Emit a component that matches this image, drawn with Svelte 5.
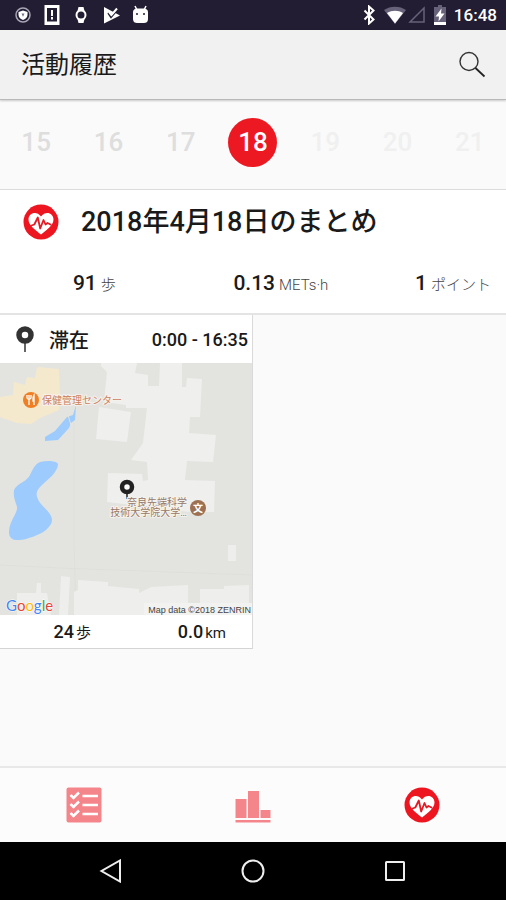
<script lang="ts">
  const days = [15, 16, 17, 18, 19, 20, 21];
  const today = 18;

  let selectedDay = $state(18);
</script>

{#snippet heart()}
  <svg class="heart" viewBox="0 0 36 36" aria-hidden="true">
    <circle cx="18" cy="18" r="17.5" fill="#ed1520" />
    <path
      d="M18 30.5C13 26.5 5.5 21.5 5.5 15.5C5.5 9 13.5 6.5 18 12.5C22.5 6.5 30.5 9 30.5 15.5C30.5 21.5 23 26.5 18 30.5Z"
      fill="#fff"
    />
    <path
      d="M8.5 21.5L11.3 20.5L14.8 13.5L17.2 24.5L20.5 16L22.5 20.5L24.5 19L27.5 20.5"
      fill="none"
      stroke="#e31b26"
      stroke-width="1.8"
      stroke-linecap="round"
      stroke-linejoin="round"
    />
  </svg>
{/snippet}

<div class="screen">
  <div class="status-bar">
    <div class="notifications">
      <svg viewBox="0 0 20 22" width="20" height="22" aria-hidden="true">
        <circle cx="10" cy="11" r="7" fill="none" stroke="#a9a6b4" stroke-width="1.5" />
        <path d="M10 6.5L14.5 8V11C14.5 13.5 12 15.3 10 16C8 15.3 5.500 13.5 5.5 11V8Z" fill="#fff" />
        <path d="M8.5 9.5H11.5L10 12.8Z" fill="#77728a" />
      </svg>
      <svg viewBox="0 0 20 22" width="20" height="22" aria-hidden="true">
        <path d="M2.5 1H17.5V21H2.500ZM5 4V17.5H15V4Z" fill="#fff" fill-rule="evenodd" />
        <path d="M9 6H11V12H9ZM9 13H11V15.5H9Z" fill="#fff" />
      </svg>
      <svg viewBox="0 0 20 22" width="20" height="22" aria-hidden="true">
        <path d="M7.5 3H12.5L13.5 7H6.5ZM6.5 15H13.5L12.5 19H7.5Z" fill="#fff" />
        <circle cx="10" cy="11" r="4.5" fill="none" stroke="#fff" stroke-width="2" />
      </svg>
      <svg viewBox="0 0 20 22" width="20" height="22" aria-hidden="true">
        <path d="M4 3L20 11.5L4 19.5Z" fill="#fff" />
        <path d="M8 9L11 13.500L16.500 7" fill="none" stroke="#231d33" stroke-width="1.5" />
        <path d="M9 8L11.5 11L17 4.5" fill="none" stroke="#fff" stroke-width="2" />
      </svg>
      <svg viewBox="0 0 20 22" width="20" height="22" aria-hidden="true">
        <path d="M6 2L8 6M17 2L15 6" stroke="#fff" stroke-width="1.5" />
        <path
          d="M4 8C4 6 6 4.5 8 4.5H15C17 4.5 19 6 19 8V15C19 18 17 19 15 19H8C6 19 4 18 4 15Z"
          fill="#fff"
        />
        <circle cx="8" cy="10" r="1" fill="#231d33" />
        <circle cx="15" cy="10" r="1" fill="#231d33" />
      </svg>
    </div>
    <div class="system">
      <svg viewBox="0 0 14 20" width="14" height="20" aria-hidden="true">
        <path
          d="M2.5 5.5L11.5 14.5L7 18.5V1.5L11.5 5.5L2.5 14.5"
          fill="none"
          stroke="#fff"
          stroke-width="2"
        />
      </svg>
      <svg viewBox="0 0 22 18" width="22" height="18" aria-hidden="true">
        <path d="M0 4C6-.5 16-.5 22 4L11 18Z" fill="#67627a" />
        <path d="M3 7C8 4 14 4 19 7L11 17.5Z" fill="#fff" />
      </svg>
      <svg class="signal" viewBox="0 0 18 18" width="18" height="18" aria-hidden="true">
        <path d="M16 2V16H2Z" fill="none" stroke="#67627a" stroke-width="1.5" />
      </svg>
      <svg viewBox="0 0 12 20" width="12" height="20" aria-hidden="true">
        <path d="M4 0H8V2H12V20H0V2H4Z" fill="#67627a" />
        <path d="M0 17H12V20H0Z" fill="#fff" />
        <path d="M7.5 3.5L1.5 11.5H5L4.5 16.5L10.5 8.5H7Z" fill="#fff" />
      </svg>
      <time>16:48</time>
    </div>
  </div>

  <header>
    <h1>活動履歴</h1>
    <button class="search" aria-label="検索">
      <svg viewBox="0 0 28 28" width="28" height="28" aria-hidden="true">
        <circle cx="11" cy="10.500" r="9" fill="none" stroke="#333" stroke-width="1.4" />
        <path d="M17.5 17L26.5 25.5" stroke="#222" stroke-width="1.8" />
      </svg>
    </button>
  </header>

  <div class="days">
    {#each days as day}
      <button
        class="day"
        class:future={day > today}
        class:selected={day === selectedDay}
        onclick={() => (selectedDay = day)}
      >
        <span>{day}</span>
      </button>
    {/each}
  </div>

  <section class="summary">
    <div class="summary-title">
      {@render heart()}
      <h2>2018年4月18日のまとめ</h2>
    </div>
    <div class="stats">
      <div><b>91</b> <span>歩</span></div>
      <div><b>0.13</b> <span>METs·h</span></div>
      <div><b>1</b> <span>ポイント</span></div>
    </div>
  </section>

  <main>
    <article class="card">
      <div class="card-header">
        <svg viewBox="0 0 22 28" width="22" height="28" aria-hidden="true">
          <path d="M11 16V27" stroke="#666" stroke-width="2" />
          <circle cx="11" cy="10" r="6" fill="#fff" stroke="#333" stroke-width="5.5" />
        </svg>
        <h3>滞在</h3>
        <time>0:00 - 16:35</time>
      </div>
      <svg class="map" viewBox="0 0 252 252" role="img" aria-label="地図">
        <rect width="252" height="252" fill="#e3e4e0" />
        <path d="M74 60V180L76 252M0 202L60 205L252 212" fill="none" stroke="#dedfdb" />
        <path
          d="M37 4L59 6L60 33L59 47L40 55L31 61L17 60L0 54V34L13 32L14 19L25 22L27 14L35 15Z"
          fill="#f5e9cd"
        />
        <path
          d="M101 0H137L135 10L148 12V23H159L160 0H182V24H186L187 15L202 16L200 54H190L189 70L216 72L213 99L187 98L185 117L215 118L214 149H190L107 139L108 110L142 111L143 118L148 117L147 99L131 97L143 80L147 45L126 45V42L104 39L107 9L101 3Z"
          fill="#efefed"
        />
        <path d="M99 44L131 49L127 79L96 76Z" fill="#efefed" />
        <path
          d="M228 182H236V198H228ZM61 213L70 214L68 252H59ZM37 220H41V230H47L51 252H17V230H36ZM78 217L108 219V223L139 226V230L151 224L188 222V244H200V226H224V223L249 222V252H74V229L78 227Z"
          fill="#eeeeec"
        />
        <path d="M76 42L75 57L71 60L69 65L58 77L45 78V74L55 68L67 54L73 52Z" fill="#9dcbfd" />
        <path d="M68 52L71 62" stroke="#e3e4e0" />
        <path
          d="M40 99C48 97 57 98 58 101C58 108 51 114 42 122C34 129 36 134 41 141C46 147 55 153 51 161C46 170 35 173 26 176C17 178 9 178 9 169C9 158 18 150 17 144C16 139 13 135 14 127C17 120 27 119 30 112C33 106 35 101 40 99Z"
          fill="#9dcbfd"
        />
        <circle cx="31" cy="37" r="8" fill="#ef7f22" />
        <path
          d="M29 32V42M27 32V35Q29 38 31 35V32M34 42V32Q32.5 34 33 38H34"
          fill="none"
          stroke="#fff"
          stroke-width="1.3"
        />
        <text class="place orange" x="42" y="41">保健管理センター</text>
        <path d="M127 128V136" stroke="#555" stroke-width="2" />
        <circle cx="127" cy="124" r="5" fill="#fff" stroke="#222" stroke-width="4.5" />
        <text class="place brown" x="187" y="143" text-anchor="end">奈良先端科学</text>
        <text class="place brown" x="187" y="153" text-anchor="end">技術大学院大学…</text>
        <circle cx="198" cy="145" r="8" fill="#9c7052" />
        <text class="school" x="198" y="149" text-anchor="middle">文</text>
        <text class="google" x="6" y="248"
          ><tspan fill="#4285f4">G</tspan><tspan fill="#ea4335">o</tspan><tspan fill="#fbbc05"
            >o</tspan
          ><tspan fill="#4285f4">g</tspan><tspan fill="#34a853">l</tspan><tspan fill="#ea4335"
            >e</tspan
          ></text
        >
        <rect x="144" y="240" width="108" height="12" fill="#f2f2f0" />
        <text class="credit" x="251" y="250" text-anchor="end">Map data ©2018 ZENRIN</text>
      </svg>
      <div class="card-footer">
        <div><b>24</b> <span>歩</span></div>
        <div><b>0.0</b> <span>km</span></div>
      </div>
    </article>
  </main>

  <nav class="tabs">
    <button aria-label="チェックリスト">
      <svg viewBox="0 0 36 36" aria-hidden="true">
        <rect x="0.5" y="0.5" width="35" height="35" rx="2" fill="#f4868b" />
        <path
          d="M4.5 8L7.5 11L13 5.5M4.5 17L7.5 20L13 14.5M4.5 26L7.5 29L13 23.5M16.5 9H32M16.5 18H32M16.5 27H32"
          fill="none"
          stroke="#fff"
          stroke-width="2.5"
        />
      </svg>
    </button>
    <button aria-label="グラフ">
      <svg viewBox="0 0 36 36" aria-hidden="true">
        <path
          d="M0.5 12H11.5V31H0.5ZM13 4H24V31H13ZM25.5 23H35.5V31H25.5ZM0.5 33H35.5V35.5H0.5Z"
          fill="#f4868b"
        />
      </svg>
    </button>
    <button aria-label="活動履歴">{@render heart()}</button>
  </nav>

  <nav class="system-nav">
    <button aria-label="戻る">
      <svg viewBox="0 0 24 24" aria-hidden="true">
        <path d="M21 1.5V22.5L2.5 12Z" />
      </svg>
    </button>
    <button aria-label="ホーム">
      <svg viewBox="0 0 24 24" aria-hidden="true"><circle cx="12" cy="12" r="10.5" /></svg>
    </button>
    <button aria-label="最近">
      <svg viewBox="0 0 24 24" aria-hidden="true">
        <rect x="3" y="3" width="18" height="18" rx="0.5" />
      </svg>
    </button>
  </nav>
</div>

<style>
  :global(body) {
    margin: 0;
  }

  .screen {
    display: flex;
    flex-direction: column;
    min-height: 100vh;
    background: #fafafa;
    color: #1a1a1a;
    font-family: Roboto, "Noto Sans CJK JP", sans-serif;
  }

  button {
    display: flex;
    align-items: center;
    justify-content: center;
    padding: 0;
    border: none;
    background: none;
    font-family: inherit;
    cursor: pointer;
  }

  h1,
  h2,
  h3 {
    margin: 0;
  }

  b {
    font-weight: 500;
  }

  svg {
    display: block;
    flex-shrink: 0;
  }

  .status-bar {
    display: flex;
    align-items: center;
    justify-content: space-between;
    height: 30px;
    padding: 0 9px 0 13px;
    background: #231d33;
    color: #fff;
  }

  .notifications,
  .system {
    display: flex;
    align-items: center;
    gap: 9px;
  }

  .system {
    gap: 8px;
  }

  .signal {
    margin-left: -6px;
  }

  .system time {
    font-size: 17px;
    font-weight: 500;
  }

  header {
    display: flex;
    align-items: center;
    justify-content: space-between;
    height: 69px;
    padding: 0 20px 0 21px;
    background: #f1f1f1;
    border-bottom: 1px solid #b9b9b9;
    box-shadow: 0 1px 2px rgba(0, 0, 0, 0.2);
  }

  h1 {
    font-size: 24px;
    font-weight: 400;
    line-height: 36px;
  }

  .days {
    display: grid;
    grid-template-columns: repeat(7, 1fr);
    padding: 18px 0 22px;
    border-bottom: 1px solid #dcdcdc;
  }

  .day {
    color: #dedede;
    font-size: 26px;
    font-weight: 500;
  }

  .day span {
    width: 49px;
    line-height: 49px;
    border-radius: 50%;
  }

  .day.future {
    color: #f0f0f0;
  }

  .day.selected span {
    background: #ed1922;
    color: #fff;
  }

  .summary {
    background: #fff;
    border-bottom: 2px solid #e4e4e4;
  }

  .heart {
    width: 36px;
    height: 36px;
  }

  .summary-title {
    display: flex;
    align-items: center;
    gap: 22px;
    height: 63px;
    padding-left: 23px;
  }

  h2 {
    font-size: 27px;
    font-weight: 500;
    line-height: 36px;
  }

  .stats {
    display: grid;
    grid-template-columns: 116fr 213fr 163fr;
    height: 60px;
    padding-right: 15px;
    line-height: 60px;
    text-align: right;
    white-space: nowrap;
  }

  .stats b {
    font-size: 21px;
  }

  .stats span {
    color: #444;
    font-size: 15px;
    font-weight: 300;
  }

  main {
    flex: 1;
  }

  .card {
    box-sizing: border-box;
    width: 50%;
    background: #fff;
    border-right: 1px solid #dadada;
    border-bottom: 1px solid #d4d4d4;
  }

  .card-header {
    display: flex;
    align-items: center;
    gap: 13px;
    height: 48px;
    padding: 0 4px 0 14px;
  }

  h3 {
    flex: 1;
    font-size: 20px;
    font-weight: 500;
  }

  .card-header time {
    font-size: 18px;
    font-weight: 500;
  }

  .map {
    width: 100%;
  }

  .place {
    font-size: 10px;
    stroke: #f5f2ec;
    stroke-width: 2px;
    paint-order: stroke;
  }

  .orange {
    fill: #cc7f5e;
  }

  .brown {
    fill: #96796a;
  }

  .school {
    fill: #fff;
    font-size: 10px;
    font-weight: 700;
  }

  .google {
    font-family: Lato, sans-serif;
    font-size: 15px;
    font-weight: 400;
    stroke: #fff;
    stroke-width: 1px;
    paint-order: stroke;
  }

  .credit {
    fill: #444;
    font-family: "Liberation Sans", Arial, sans-serif;
    font-size: 9px;
  }

  .card-footer {
    display: grid;
    grid-template-columns: 91fr 135fr;
    height: 33px;
    padding-right: 26px;
    line-height: 33px;
    text-align: right;
    white-space: nowrap;
  }

  .card-footer div {
    display: flex;
    align-items: baseline;
    justify-content: flex-end;
    gap: 2px;
  }

  .card-footer b {
    font-size: 18px;
  }

  .card-footer span {
    font-size: 15px;
    font-weight: 400;
  }

  .tabs {
    display: grid;
    grid-template-columns: repeat(3, 1fr);
    height: 74px;
    border-top: 2px solid #e8e8e8;
    background: #fcfcfc;
  }

  .tabs svg {
    width: 36px;
    height: 36px;
  }

  .system-nav {
    display: grid;
    grid-template-columns: repeat(3, 1fr);
    height: 58px;
    padding: 0 8%;
    background: #000;
  }

  .system-nav svg {
    width: 24px;
    height: 24px;
    fill: none;
    stroke: #eee;
    stroke-width: 2;
  }
</style>
